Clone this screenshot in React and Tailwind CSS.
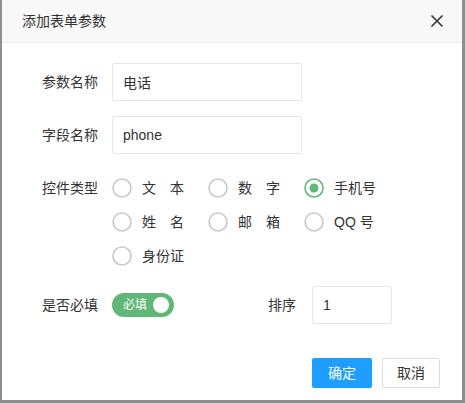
import { useState } from "react";

const FONT = { fontFamily: '"Liberation Sans", "Noto Sans CJK SC", sans-serif' };

const TYPES = [
  { id: "text", label: "文　本" },
  { id: "number", label: "数　字" },
  { id: "mobile", label: "手机号" },
  { id: "name", label: "姓　名" },
  { id: "email", label: "邮　箱" },
  { id: "qq", label: "QQ 号" },
  { id: "idcard", label: "身份证" },
];

function Radio({ checked }) {
  return (
    <svg width="20" height="20" viewBox="0 0 20 20" className="shrink-0">
      <circle cx="10" cy="10" r="9" fill="#fff" stroke={checked ? "#5fb878" : "#c9c9c9"} strokeWidth="1.6" />
      {checked && <circle cx="10" cy="10" r="4.5" fill="#5fb878" />}
    </svg>
  );
}

function Label({ children, className = "" }) {
  return <div className={`w-[70px] shrink-0 pr-[14px] text-right text-[14px] text-[#333] ${className}`}>{children}</div>;
}

export default function App() {
  const [type, setType] = useState("mobile");
  const [required, setRequired] = useState(true);

  return (
    <div className="w-[465px] h-[403px] bg-[#8e8e8e] pl-[2px]" style={FONT}>
      <div className="w-[460px] h-[400px] bg-white flex flex-col">
        {/* Header */}
        <div className="h-[43px] shrink-0 bg-[#f8f8f8] border-b border-[#eee] flex items-center justify-between pl-[20px] pr-[18px]">
          <span className="text-[14px] text-[#333]">添加表单参数</span>
          <svg width="14" height="14" viewBox="0 0 14 14">
            <path d="M1.5 1.5 L12.5 12.5 M12.5 1.5 L1.5 12.5" stroke="#333" strokeWidth="1.6" fill="none" />
          </svg>
        </div>

        {/* Form */}
        <div className="pt-[20px] pl-[40px]">
          <div className="flex items-center h-[38px]">
            <Label>参数名称</Label>
            <input
              defaultValue="电话"
              className="w-[190px] h-[38px] border border-[#e6e6e6] rounded-[2px] px-[10px] text-[14px] text-[#333] outline-none"
            />
          </div>
          <div className="flex items-center h-[38px] mt-[15px]">
            <Label>字段名称</Label>
            <input
              defaultValue="phone"
              className="w-[190px] h-[38px] border border-[#e6e6e6] rounded-[2px] px-[10px] text-[14px] text-[#333] outline-none"
            />
          </div>

          <div className="flex mt-[17px]">
            <Label className="h-[34px] leading-[34px]">控件类型</Label>
            <div className="grid grid-cols-[96px_96px_96px]">
              {TYPES.map((t) => (
                <button
                  key={t.id}
                  onClick={() => setType(t.id)}
                  className="h-[34px] flex items-center gap-[10px] text-[14px] text-[#333]"
                >
                  <Radio checked={type === t.id} />
                  <span>{t.label}</span>
                </button>
              ))}
            </div>
          </div>

          <div className="flex items-center h-[38px] mt-[13px]">
            <Label>是否必填</Label>
            <div className="w-[130px] shrink-0">
              <button
                onClick={() => setRequired(!required)}
                className={`relative w-[62px] h-[24px] rounded-full flex items-center pl-[11px] ${required ? "bg-[#5fb878]" : "bg-[#d2d2d2]"}`}
              >
                <span className="text-[12px] text-white">{required ? "必填" : "选填"}</span>
                <span className="absolute right-[5px] top-[4px] w-[16px] h-[16px] rounded-full bg-white" />
              </button>
            </div>
            <Label className="pr-[16px]">排序</Label>
            <input
              defaultValue="1"
              className="w-[80px] h-[38px] border border-[#e6e6e6] rounded-[2px] px-[10px] text-[14px] text-[#333] outline-none"
            />
          </div>
        </div>

        {/* Footer */}
        <div className="flex justify-end gap-[10px] pr-[22px] mt-[34px]">
          <button className="w-[60px] h-[30px] bg-[#1e9fff] text-white text-[14px] rounded-[2px]">确定</button>
          <button className="w-[58px] h-[30px] bg-white border border-[#dedede] text-[#333] text-[14px] rounded-[2px]">取消</button>
        </div>
      </div>
    </div>
  );
}
